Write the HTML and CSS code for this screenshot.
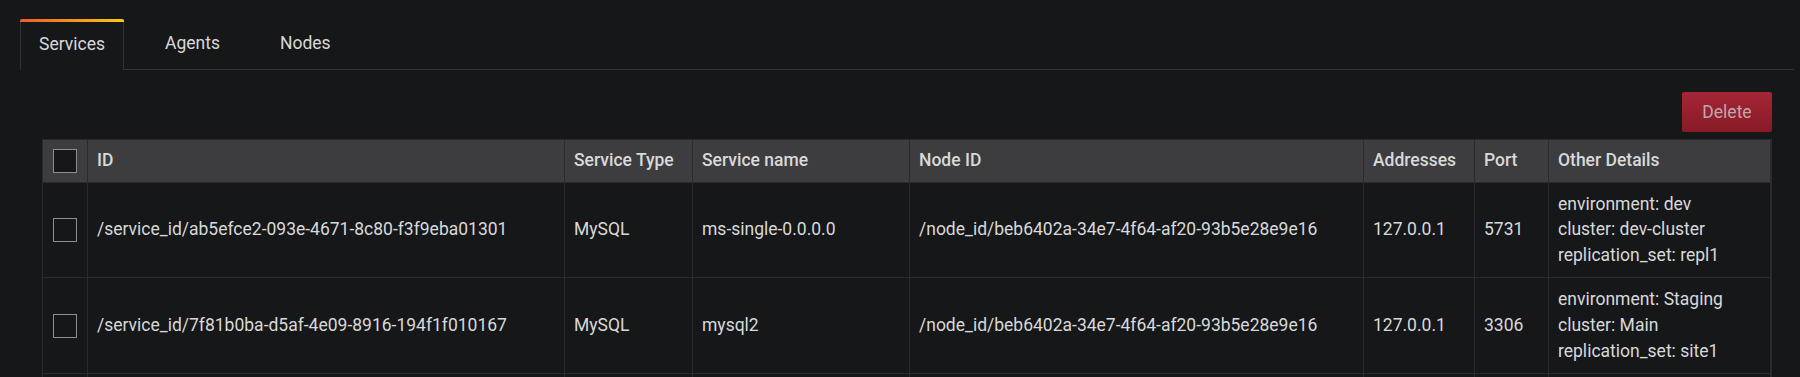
FILE: index.html
```html
<!DOCTYPE html>
<html>
<head>
<meta charset="utf-8">
<link rel="stylesheet" href="styles.css">
</head>
<body>
<div class="page">
  <div class="tabs">
    <div class="tab active">Services</div>
    <div class="tab">Agents</div>
    <div class="tab">Nodes</div>
  </div>
  <div class="content">
    <div class="toolbar">
      <button class="btn-delete">Delete</button>
    </div>
    <div class="table-wrap">
      <table class="grid">
        <colgroup>
          <col class="c-check">
          <col class="c-id">
          <col class="c-type">
          <col class="c-name">
          <col class="c-node">
          <col class="c-addr">
          <col class="c-port">
          <col class="c-other">
        </colgroup>
        <thead>
          <tr>
            <th class="cell-check"><span class="checkbox"></span></th>
            <th>ID</th>
            <th>Service Type</th>
            <th>Service name</th>
            <th>Node ID</th>
            <th>Addresses</th>
            <th>Port</th>
            <th>Other Details</th>
          </tr>
        </thead>
        <tbody>
          <tr>
            <td class="cell-check"><span class="checkbox"></span></td>
            <td>/service_id/ab5efce2-093e-4671-8c80-f3f9eba01301</td>
            <td>MySQL</td>
            <td>ms-single-0.0.0.0</td>
            <td>/node_id/beb6402a-34e7-4f64-af20-93b5e28e9e16</td>
            <td>127.0.0.1</td>
            <td>5731</td>
            <td><div>environment: dev</div><div>cluster: dev-cluster</div><div>replication_set: repl1</div></td>
          </tr>
          <tr>
            <td class="cell-check"><span class="checkbox"></span></td>
            <td>/service_id/7f81b0ba-d5af-4e09-8916-194f1f010167</td>
            <td>MySQL</td>
            <td>mysql2</td>
            <td>/node_id/beb6402a-34e7-4f64-af20-93b5e28e9e16</td>
            <td>127.0.0.1</td>
            <td>3306</td>
            <td><div>environment: Staging</div><div>cluster: Main</div><div>replication_set: site1</div></td>
          </tr>
          <tr class="row-empty">
            <td></td><td></td><td></td><td></td><td></td><td></td><td></td><td></td>
          </tr>
        </tbody>
      </table>
    </div>
  </div>
</div>
</body>
</html>
```
FILE: styles.css
```css
html, body {
  margin: 0;
  padding: 0;
  background: #161719;
  height: 100%;
  overflow: hidden;
}
body {
  font-family: Roboto, "Liberation Sans", sans-serif;
  font-size: 17.5px;
  color: #d8d9da;
}
.page {
  padding: 19px 6px 0 20px;
}
.tabs {
  display: flex;
  height: 50px;
  border-bottom: 1px solid #333335;
}
.tab {
  position: relative;
  display: flex;
  align-items: center;
  padding: 0 18px 2px;
  margin-right: 22px;
  border-left: 1px solid transparent;
  border-right: 1px solid transparent;
  color: #d8d9da;
}
.tab.active {
  border-left-color: #333335;
  border-right-color: #333335;
  background: #161719;
  margin-bottom: -1px;
}
.tab.active::before {
  content: "";
  position: absolute;
  left: -1px;
  right: -1px;
  top: 0;
  height: 3px;
  border-radius: 2px 2px 0 0;
  background: linear-gradient(90deg, #f05a28, #fbca0a);
}
.content {
  padding: 0 22px;
}
.toolbar {
  display: flex;
  justify-content: flex-end;
  margin-top: 22px;
}
.btn-delete {
  width: 90px;
  height: 40px;
  border: none;
  border-radius: 2px;
  background: linear-gradient(180deg, #a52536, #881a26);
  color: #bfa8ab;
  font-family: Roboto, "Liberation Sans", sans-serif;
  font-size: 17.5px;
  padding: 0;
}
.table-wrap {
  margin-top: 7px;
  border-right: 1px solid #2a2b2e;
  min-height: 300px;
}
.grid {
  width: 1729px;
  border-collapse: collapse;
  table-layout: fixed;
}
.c-check { width: 45px; }
.c-id { width: 477px; }
.c-type { width: 128px; }
.c-name { width: 217px; }
.c-node { width: 454px; }
.c-addr { width: 111px; }
.c-port { width: 74px; }
.grid th,
.grid td {
  border: 1px solid #2a2b2e;
  padding: 9px 9px;
  text-align: left;
  line-height: 25.6px;
  white-space: nowrap;
}
.grid th {
  background: #3d3d3f;
  font-weight: 500;
  color: #d8d9da;
  border-color: #2a2a2c;
  padding-top: 8px;
  padding-bottom: 8px;
}
.grid td {
  height: 76px;
  vertical-align: middle;
}
.grid .cell-check {
  padding: 0 0 0 10px;
}
.checkbox {
  display: block;
  width: 22px;
  height: 22px;
  border: 1px solid #8f8f8f;
  background: #161719;
}
```
